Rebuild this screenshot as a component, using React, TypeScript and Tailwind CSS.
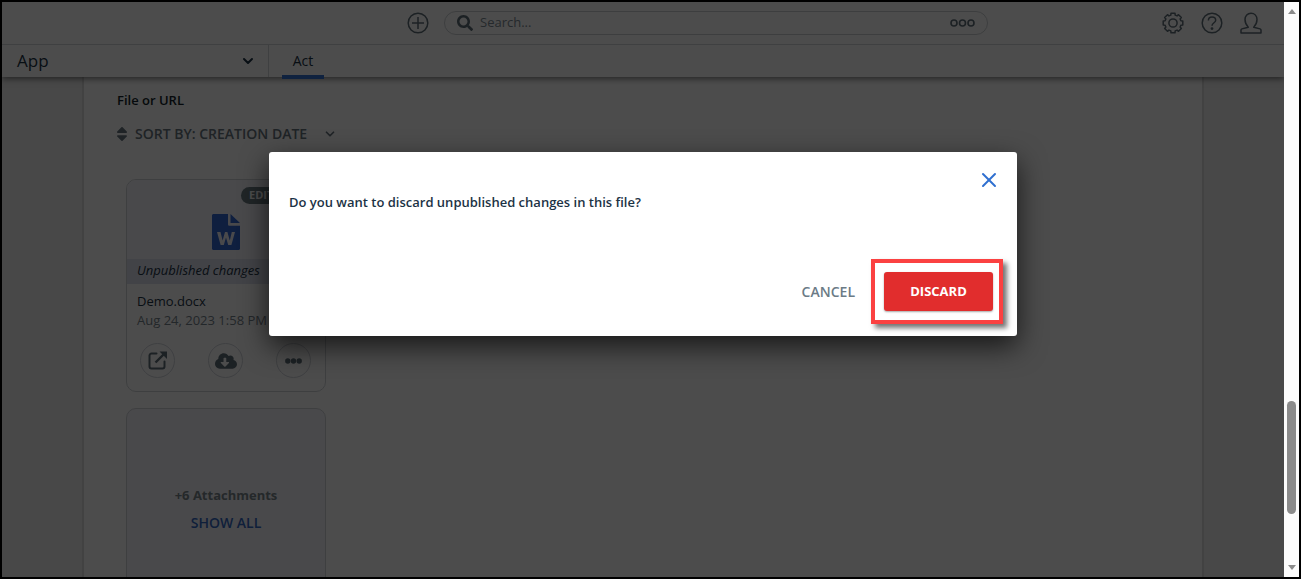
import type { ReactNode } from 'react';
import { FaCloudDownloadAlt, FaSearch, FaSort } from 'react-icons/fa';
import { ChevronDown, X } from 'lucide-react';

function PlusCircleIcon() {
  return (
    <svg viewBox="0 0 22 22" className="size-[22px]" fill="none" stroke="currentColor" strokeWidth="1.5">
      <circle cx="11" cy="11" r="9.8" />
      <path d="M11 5v12M5 11h12" />
    </svg>
  );
}

function GearIcon() {
  // eight teeth, one every 45 degrees
  const points: string[] = [];
  for (let i = 0; i < 8; i++) {
    const base = (i * Math.PI) / 4;
    [[-0.27, 8.2], [-0.2, 10], [0.2, 10], [0.27, 8.2]].forEach(([offset, radius]) => {
      const x = 11 + radius * Math.sin(base + offset);
      const y = 11 - radius * Math.cos(base + offset);
      points.push(`${x.toFixed(2)},${y.toFixed(2)}`);
    });
  }
  return (
    <svg viewBox="0 0 22 22" className="size-[22px]" fill="none" stroke="currentColor" strokeWidth="1.5" strokeLinejoin="round">
      <polygon points={points.join(' ')} />
      <circle cx="11" cy="11" r="4.1" />
    </svg>
  );
}

function HelpIcon() {
  return (
    <svg viewBox="0 0 22 22" className="size-[22px]" fill="none" stroke="currentColor" strokeWidth="1.5">
      <circle cx="11" cy="11" r="9.8" />
      <path d="M7.4 8.6c0-2.200 1.500-3.500 3.600-3.500s3.700 1.200 3.700 3.200c0 2.500-3.700 2.500-3.700 5.500" />
      <circle cx="11" cy="16.6" r=".7" fill="currentColor" />
    </svg>
  );
}

function UserIcon() {
  return (
    <svg viewBox="0 0 22 22" className="size-[22px]" fill="none" stroke="currentColor" strokeWidth="1.5" strokeLinejoin="round">
      <path d="M8.300 15.200C6.200 13.200 5 10.400 5 7.600 5 3.800 7.600 1.200 11 1.200s6 2.600 6 6.400c0 2.800-1.200 5.600-3.300 7.600l6.400 1.700c.6.200.9.600.9 1.200v3H1v-3c0-.6.300-1 .9-1.200z" />
    </svg>
  );
}

function WordFileIcon() {
  return (
    <svg viewBox="0 0 28 36" className="h-9 w-7">
      <path fill="#3568d4" d="M1.500 0H16v10.200c0 .9.700 1.600 1.600 1.600H28v22.700c0 .8-.7 1.500-1.500 1.500h-25C.700 36 0 35.300 0 34.500v-33C0 .7.700 0 1.500 0zM18.500 0l9.500 9h-9.500z" />
      <path
        fill="#f4f5fb"
        d="M5 18h3.500l2.100 8.600L13 18h2.400l2.400 8.600 2-8.600H23l-3.600 13h-3.200l-2.200-7.400-2.200 7.400H8.600z"
      />
    </svg>
  );
}

function OpenIcon() {
  return (
    <svg viewBox="0 0 20 20" className="size-5" fill="none" stroke="currentColor" strokeWidth="2">
      <path d="M8.500 2.500H3.500a2 2 0 0 0-2 2v11a2 2 0 0 0 2 2h11a2 2 0 0 0 2-2v-5" strokeLinecap="round" />
      <path d="M7.500 11.500L16 3" strokeWidth="2.400" />
      <path fill="currentColor" stroke="none" d="M11.500.500h7.500v7.500z" />
    </svg>
  );
}

function DotsIcon() {
  return (
    <svg viewBox="0 0 17 6" className="h-[6px] w-[17px]" fill="currentColor">
      <circle cx="2.800" cy="3" r="2.700" />
      <circle cx="8.500" cy="3" r="2.700" />
      <circle cx="14.200" cy="3" r="2.700" />
    </svg>
  );
}

function RoundButton({ label, children }: { label: string; children: ReactNode }) {
  return (
    <button
      type="button"
      aria-label={label}
      className="flex size-[35px] items-center justify-center rounded-full border border-gray-300 text-[#5f6e78]"
    >
      {children}
    </button>
  );
}

function Header() {
  return (
    <header className="relative z-10 bg-white shadow-[0_2px_6px_rgba(0,0,0,0.5)]">
      <div className="grid h-[43px] grid-cols-[405px_1fr_296px] items-center border-b border-[#d4d8da] text-[#5f6e78]">
        <div />
        <div className="flex items-center gap-[15px]">
          <button type="button" aria-label="Create">
            <PlusCircleIcon />
          </button>
          <div className="flex h-6 flex-1 items-center rounded-full border border-[#ccd0d3] px-3">
            <FaSearch className="size-4" />
            <input
              type="text"
              aria-label="Search"
              placeholder="Search..."
              className="ml-[7px] min-w-0 flex-1 bg-transparent text-[13px] outline-none placeholder:text-[#7d8b95]"
            />
            <button type="button" aria-label="Search options">
              <svg viewBox="0 0 25 8" className="h-2 w-[25px]" fill="none" stroke="currentColor" strokeWidth="1.600">
                <circle cx="4" cy="4" r="3" />
                <circle cx="12.500" cy="4" r="3" />
                <circle cx="21" cy="4" r="3" />
              </svg>
            </button>
          </div>
        </div>
        <div className="flex items-center justify-end gap-[17px] pr-[22px]">
          <button type="button" aria-label="Settings"><GearIcon /></button>
          <button type="button" aria-label="Help"><HelpIcon /></button>
          <button type="button" aria-label="Profile"><UserIcon /></button>
        </div>
      </div>
      <nav className="flex h-8 text-[#1c3345]">
        <button
          type="button"
          className="flex w-[267px] items-center justify-between border-r border-[#d4d8da] pr-3 pl-[15px] text-[17px] leading-7 font-medium"
        >
          App
          <ChevronDown className="size-4" strokeWidth={3} />
        </button>
        <a href="#act" className="ml-[13px] flex h-[34px] w-[42px] flex-col items-center text-sm">
          <span className="h-[30px] leading-8">Act</span>
          <span className="h-1 w-full bg-[#3574d4]" />
        </a>
      </nav>
    </header>
  );
}

function FileCard() {
  return (
    <article className="w-[200px] overflow-hidden rounded-[10px] border border-[#d0d3d8]">
      <div className="flex h-[79px] flex-col items-center bg-[#f4f5fb] pt-[7px]">
        <span className="mr-2 h-[17px] w-[76px] self-end rounded-full bg-[#6c7c84] pl-2 text-[11px] leading-4 font-bold text-white">
          EDITING
        </span>
        <span className="mt-[10px]">
          <WordFileIcon />
        </span>
      </div>
      <p className="h-[25px] bg-[#dce1ef] pl-[10px] text-[13px] leading-[22px] text-[#1c3345] italic">Unpublished changes</p>
      <div className="px-[10px] pt-[7px] whitespace-nowrap">
        <p className="text-[13px] leading-5 text-[#1c3345]">Demo.docx</p>
        <p className="text-[13px] leading-[18px] text-[#77838c]">Aug 24, 2023 1:58 PM</p>
      </div>
      <div className="mt-[14px] mb-[13px] flex justify-between pr-[14px] pl-[13px]">
        <RoundButton label="Open"><OpenIcon /></RoundButton>
        <RoundButton label="Download"><FaCloudDownloadAlt className="size-[22px]" /></RoundButton>
        <RoundButton label="More"><DotsIcon /></RoundButton>
      </div>
    </article>
  );
}

function Attachments() {
  return (
    <main className="mx-20 flex-1 border-x-2 border-[#dcdcdc] bg-white px-[33px]">
      <h2 className="pt-[13px] text-[13px] leading-5 font-semibold text-[#121f29]">File or URL</h2>
      <button type="button" className="mt-[14px] flex h-5 items-center text-sm font-semibold text-[#687680]">
        <FaSort className="mr-1 -ml-1 size-[18px]" />
        SORT BY: CREATION DATE
        <ChevronDown className="ml-4 size-[14px]" strokeWidth={3} />
      </button>
      <div className="mt-[35px] ml-[9px] flex flex-col gap-4">
        <FileCard />
        <section className="flex h-[213px] w-[200px] flex-col items-center gap-2 rounded-[10px] border border-[#d0d3d8] bg-[#f4f5fb] pt-[76px] leading-5">
          <p className="text-[13px] font-bold text-[#7b858c]">+6 Attachments</p>
          <button type="button" className="text-sm font-semibold text-[#3568c4]">SHOW ALL</button>
        </section>
      </div>
    </main>
  );
}

function DiscardDialog() {
  return (
    <div className="absolute inset-0 z-20 flex items-start justify-center bg-black/70 pt-[150px]">
      <div
        role="dialog"
        aria-modal="true"
        aria-labelledby="discard-title"
        className="w-[748px] max-w-full rounded-[3px] bg-white shadow-[0_10px_28px_rgba(0,0,0,0.7)]"
      >
        <div className="flex justify-end pt-4 pr-4">
          <button type="button" aria-label="Close" className="text-[#2f6fd0]">
            <X className="size-6" strokeWidth={2} />
          </button>
        </div>
        <h1 id="discard-title" className="px-5 text-[13px] leading-5 font-semibold text-[#1c3345]">
          Do you want to discard unpublished changes in this file?
        </h1>
        <div className="mt-[47px] flex items-center justify-end gap-4 pr-[14px] pb-3">
          <button type="button" className="text-sm font-semibold text-[#6b7b86]">CANCEL</button>
          <div className="border-4 border-[#fb4141] py-[9px] pr-[6px] pl-[9px] shadow-[4px_4px_5px_rgba(0,0,0,0.55)]">
            <button
              type="button"
              className="block h-[39px] w-[109px] rounded-[3px] bg-[#e12d2d] text-[13px] font-bold text-white shadow-[0_1px_2px_rgba(0,0,0,0.35)]"
            >
              DISCARD
            </button>
          </div>
        </div>
      </div>
    </div>
  );
}

function ScrollTrack() {
  return (
    <div aria-hidden="true" className="flex w-[15px] shrink-0 flex-col items-center bg-[#fcfcfc] py-[7px]">
      <span className="h-0 w-0 border-x-4 border-b-5 border-x-transparent border-b-[#8b8b8b]" />
      <span className="mt-[387px] h-[113px] w-[9px] rounded-full bg-[#8b8b8b]" />
      <span className="mt-auto h-0 w-0 border-x-4 border-t-5 border-x-transparent border-t-[#8b8b8b]" />
    </div>
  );
}

export default function App() {
  return (
    <div className="flex h-screen overflow-hidden border-2 border-black font-['Open_Sans','Noto_Sans',sans-serif]">
      <div className="relative flex min-w-0 flex-1 flex-col overflow-hidden bg-[#f0f0f0]">
        <Header />
        <Attachments />
        <DiscardDialog />
      </div>
      <ScrollTrack />
    </div>
  );
}
